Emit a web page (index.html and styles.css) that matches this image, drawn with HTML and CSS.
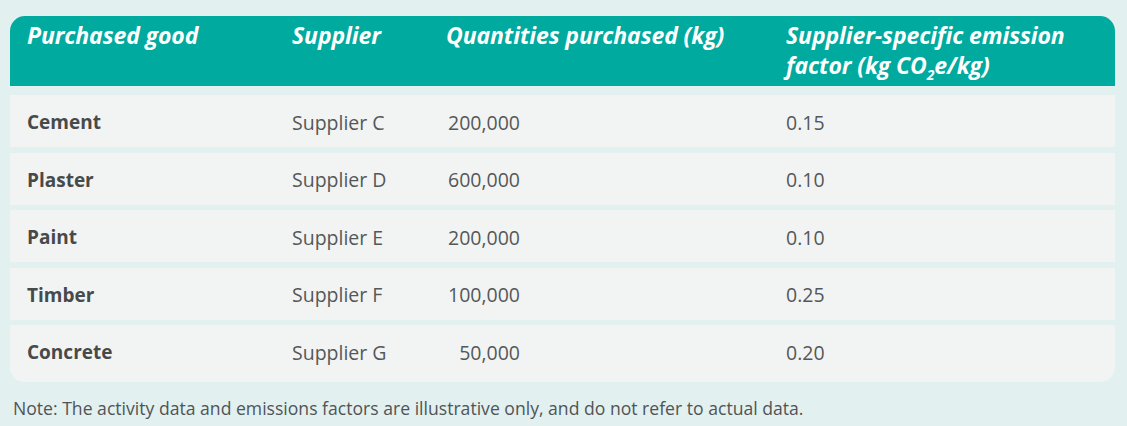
FILE: index.html
```html
<!DOCTYPE html>
<html>
<head>
<meta charset="utf-8">
<link rel="stylesheet" href="styles.css">
</head>
<body>
<div class="page">
  <div class="table">
    <div class="row head">
      <div class="cell">Purchased good</div>
      <div class="cell">Supplier</div>
      <div class="cell">Quantities purchased (kg)</div>
      <div class="cell">Supplier-specific emission<br>factor (kg CO<sub>2</sub>e/kg)</div>
    </div>
    <div class="row">
      <div class="cell name">Cement</div>
      <div class="cell">Supplier C</div>
      <div class="cell"><span class="num">200,000</span></div>
      <div class="cell">0.15</div>
    </div>
    <div class="row">
      <div class="cell name">Plaster</div>
      <div class="cell">Supplier D</div>
      <div class="cell"><span class="num">600,000</span></div>
      <div class="cell">0.10</div>
    </div>
    <div class="row">
      <div class="cell name">Paint</div>
      <div class="cell">Supplier E</div>
      <div class="cell"><span class="num">200,000</span></div>
      <div class="cell">0.10</div>
    </div>
    <div class="row">
      <div class="cell name">Timber</div>
      <div class="cell">Supplier F</div>
      <div class="cell"><span class="num">100,000</span></div>
      <div class="cell">0.25</div>
    </div>
    <div class="row last">
      <div class="cell name">Concrete</div>
      <div class="cell">Supplier G</div>
      <div class="cell"><span class="num">50,000</span></div>
      <div class="cell">0.20</div>
    </div>
  </div>
  <p class="note">Note: The activity data and emissions factors are illustrative only, and do not refer to actual data.</p>
</div>
</body>
</html>
```
FILE: styles.css
```css
html, body {
  margin: 0;
  padding: 0;
  background: #e2f0f0;
}
body {
  font-family: "Open Sans", "Noto Sans", sans-serif;
  color: #545859;
  width: 1127px;
  height: 426px;
  overflow: hidden;
}
.page {
  padding: 16px 12px 0 10px;
}
.table {
  display: flex;
  flex-direction: column;
  gap: 5.5px;
  width: 1105px;
}
.row {
  display: grid;
  grid-template-columns: 265px 154px 340px 1fr;
  align-items: center;
  height: 52px;
  background: #f2f4f3;
  font-size: 19.5px;
}
.row .cell {
  padding-top: 2px;
}
.row.head {
  background: #00aa9f;
  color: #ffffff;
  font-weight: 700;
  font-style: italic;
  height: 70px;
  align-items: start;
  border-radius: 15px 15px 0 0;
  margin-bottom: 3.5px;
  font-size: 23px;
  line-height: 30px;
  letter-spacing: -0.1px;
}
.row.head .cell {
  padding-top: 4px;
}
.row.last {
  height: 57px;
  padding-bottom: 5px;
  box-sizing: border-box;
  border-radius: 0 0 15px 15px;
}
.cell {
  padding-left: 17px;
}
.name {
  font-weight: 700;
  font-size: 19px;
  color: #474a4b;
}
.num {
  display: inline-block;
  min-width: 74px;
  text-align: right;
}
sub {
  font-size: 14px;
  line-height: 0;
  vertical-align: -6px;
}
.note {
  margin: 14px 0 0 3px;
  font-size: 17.6px;
  color: #505456;
}
```
